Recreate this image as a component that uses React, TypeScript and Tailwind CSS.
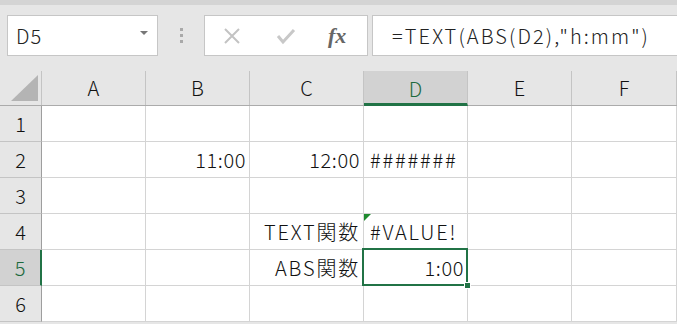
import React from "react";

const cols = [
  { label: "A", w: "w-[104px]" },
  { label: "B", w: "w-[104px]" },
  { label: "C", w: "w-[114px]" },
  { label: "D", w: "w-[104px]" },
  { label: "E", w: "w-[104px]" },
  { label: "F", w: "w-[105px]" },
];

const data: Record<string, string> = {
  B2: "11:00",
  C2: "12:00",
  D2: "#######",
  C4: "TEXT関数",
  D4: "#VALUE!",
  C5: "ABS関数",
  D5: "1:00",
};

const leftAligned = ["D2", "D4"];
const times = ["B2", "C2", "D5"];

export default function App() {
  return (
    <div
      className="w-[677px] h-[324px] overflow-hidden bg-[#e6e6e6] text-[#111] font-light"
      style={{ fontFamily: '"Noto Sans CJK JP", "Noto Sans", sans-serif' }}
    >
      <div className="h-[5px] bg-[#d4d4d4]" />

      {/* formula bar */}
      <div className="flex items-stretch h-[41px] mt-[10px] pl-[7px]">
        <div className="w-[151px] bg-white border border-[#c6c6c6] flex items-center justify-between pl-[8px] pr-[9px]">
          <span className="text-[20px] text-[#222] tracking-[1px]">D5</span>
          <span className="w-0 h-0 border-l-[4px] border-r-[4px] border-t-[4px] border-l-transparent border-r-transparent border-t-[#777] mt-[-6px]" />
        </div>
        <div className="w-[46px] flex flex-col items-center justify-center gap-[3px]">
          <span className="w-[3px] h-[3px] bg-[#a9a9a9]" />
          <span className="w-[3px] h-[3px] bg-[#a9a9a9]" />
          <span className="w-[3px] h-[3px] bg-[#a9a9a9]" />
        </div>
        <div className="w-[164px] bg-white border border-[#c6c6c6] flex items-center pl-[17px]">
          <svg width="20" height="20" viewBox="0 0 20 20">
            <path d="M3 3 L17 17 M17 3 L3 17" stroke="#c3c3c3" strokeWidth="2" fill="none" />
          </svg>
          <svg width="22" height="20" viewBox="0 0 22 20" className="ml-[33px]">
            <path d="M3 10 L8 16 L19 4" stroke="#c8c8c8" strokeWidth="3" fill="none" />
          </svg>
          <span
            className="ml-[31px] text-[22px] italic text-[#666] font-bold leading-none"
            style={{ fontFamily: '"Liberation Serif", serif' }}
          >
            fx
          </span>
        </div>
        <div className="flex-1 ml-[4px] bg-white border border-[#c6c6c6] border-r-0 flex items-center pl-[19px]">
          <span className="text-[20px] text-[#222] tracking-[2.1px]">=TEXT(ABS(D2),"h:mm")</span>
        </div>
      </div>

      {/* grid */}
      <div className="mt-[15px]">
        <div className="flex h-[35px] border-b border-[#ababab]">
          <div className="w-[42px] border-r border-[#c4c4c4] flex items-end justify-end pr-[3px] pb-[4px]">
            <svg width="27" height="26" viewBox="0 0 27 26">
              <path d="M27 0 L27 26 L0 26 Z" fill="#b4b4b4" />
            </svg>
          </div>
          {cols.map((c) => (
            <div
              key={c.label}
              className={`${c.w} shrink-0 border-r border-[#c4c4c4] flex items-center justify-center text-[20px] ${
                c.label === "D" ? "bg-[#d2d2d2] text-[#1d6a3e] border-b-[3px] border-b-[#217346] -mb-px pt-[3px]" : ""
              }`}
            >
              {c.label}
            </div>
          ))}
        </div>
        {[1, 2, 3, 4, 5, 6].map((r) => (
          <div key={r} className="flex h-[36px]">
            <div
              className={`w-[42px] shrink-0 flex items-center justify-center text-[20px] border-b border-[#c4c4c4] ${
                r === 5
                  ? "bg-[#d2d2d2] text-[#1d6a3e] border-r-[2px] border-r-[#217346]"
                  : "border-r border-r-[#9e9e9e]"
              }`}
            >
              {r}
            </div>
            {cols.map((c) => {
              const id = `${c.label}${r}`;
              const v = data[id];
              const sel = id === "D5";
              return (
                <div
                  key={id}
                  className={`${c.w} shrink-0 relative bg-white border-r border-b border-[#d4d4d4] flex items-center text-[20px] ${
                    leftAligned.includes(id) ? "justify-start pl-[6px]" : "justify-end pr-[3px]"
                  } ${times.includes(id) ? "tracking-[0.6px]" : "tracking-[1.8px]"} ${sel ? "z-10" : ""}`}
                >
                  {id === "D4" && (
                    <span className="absolute left-0 top-0 w-0 h-0 border-t-[7px] border-r-[7px] border-t-[#1e8a2e] border-r-transparent" />
                  )}
                  {sel && (
                    <>
                      <span className="absolute -left-[2px] -top-[2px] -right-px -bottom-px border-2 border-[#217346]" />
                      <span className="absolute -right-[4px] -bottom-[4px] w-[7px] h-[7px] bg-[#217346] border border-white" />
                    </>
                  )}
                  <span className="relative">{v}</span>
                </div>
              );
            })}
          </div>
        ))}
      </div>
    </div>
  );
}
